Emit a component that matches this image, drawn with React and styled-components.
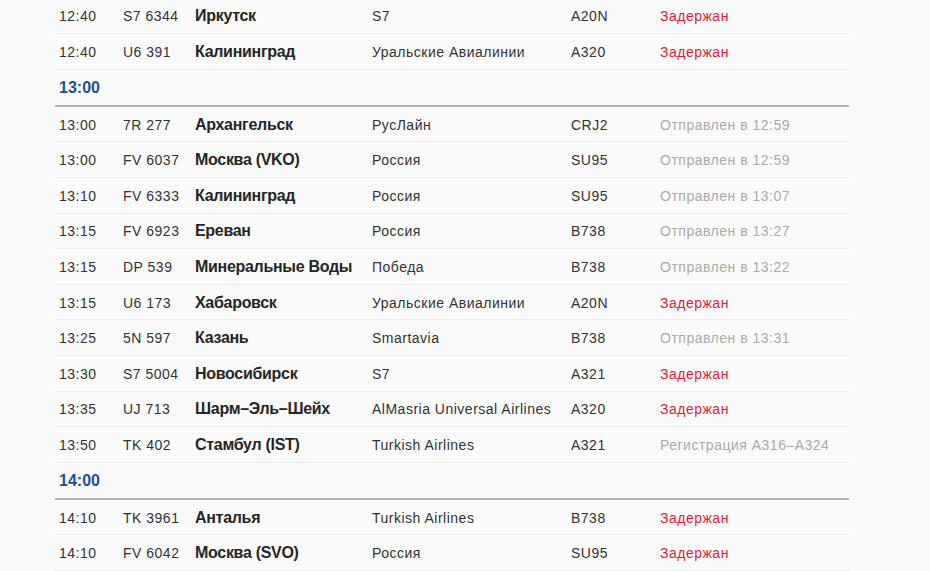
import React from 'react';
import styled, { createGlobalStyle } from 'styled-components';

const GlobalStyle = createGlobalStyle`
    html, body {
        margin: 0;
        padding: 0;
        background: #fafafa;
        font-family: "Liberation Sans", Arial, sans-serif;
        color: #333;
    }
`;

const groups = [
    {
        hour: null,
        flights: [
            ['12:40', 'S7 6344', 'Иркутск', 'S7', 'A20N', 'delayed'],
            ['12:40', 'U6 391', 'Калининград', 'Уральские Авиалинии', 'A320', 'delayed'],
        ],
    },
    {
        hour: '13:00',
        flights: [
            ['13:00', '7R 277', 'Архангельск', 'РусЛайн', 'CRJ2', 'Отправлен в 12:59'],
            ['13:00', 'FV 6037', 'Москва (VKO)', 'Россия', 'SU95', 'Отправлен в 12:59'],
            ['13:10', 'FV 6333', 'Калининград', 'Россия', 'SU95', 'Отправлен в 13:07'],
            ['13:15', 'FV 6923', 'Ереван', 'Россия', 'B738', 'Отправлен в 13:27'],
            ['13:15', 'DP 539', 'Минеральные Воды', 'Победа', 'B738', 'Отправлен в 13:22'],
            ['13:15', 'U6 173', 'Хабаровск', 'Уральские Авиалинии', 'A20N', 'delayed'],
            ['13:25', '5N 597', 'Казань', 'Smartavia', 'B738', 'Отправлен в 13:31'],
            ['13:30', 'S7 5004', 'Новосибирск', 'S7', 'A321', 'delayed'],
            ['13:35', 'UJ 713', 'Шарм–Эль–Шейх', 'AlMasria Universal Airlines', 'A320', 'delayed'],
            ['13:50', 'TK 402', 'Стамбул (IST)', 'Turkish Airlines', 'A321', 'Регистрация A316–A324'],
        ],
    },
    {
        hour: '14:00',
        flights: [
            ['14:10', 'TK 3961', 'Анталья', 'Turkish Airlines', 'B738', 'delayed'],
            ['14:10', 'FV 6042', 'Москва (SVO)', 'Россия', 'SU95', 'delayed'],
        ],
    },
];

const Board = () => {
    return (
        <Page>
            <GlobalStyle />
            <Table>
                {groups.map((group, g) => (
                    <React.Fragment key={g}>
                        {group.hour && <HourRow>{group.hour}</HourRow>}
                        {group.flights.map((f, i) => {
                            const delayed = f[5] === 'delayed';
                            return (
                                <Row key={i}>
                                    <Cell>{f[0]}</Cell>
                                    <Cell>{f[1]}</Cell>
                                    <City>{f[2]}</City>
                                    <Cell>{f[3]}</Cell>
                                    <Cell>{f[4]}</Cell>
                                    <Status $delayed={delayed}>{delayed ? 'Задержан' : f[5]}</Status>
                                </Row>
                            );
                        })}
                    </React.Fragment>
                ))}
            </Table>
        </Page>
    );
}

const Page = styled.div`
    width: 930px;
    height: 571px;
    overflow: hidden;
`;

const Table = styled.div`
    width: 794px;
    margin: -1.4px 0 0 55px;
`;

const Row = styled.div`
    display: grid;
    grid-template-columns: 64px 72px 177px 199px 89px 1fr;
    align-items: center;
    height: 34.6px;
    padding-top: 1px;
    box-sizing: border-box;
    height: 35.6px;
    border-bottom: 1px solid #ebebeb;
    font-size: 14px;
    letter-spacing: 0.5px;
`;

const Cell = styled.div`
    padding-left: 4px;
    white-space: nowrap;
`;

const City = styled(Cell)`
    font-size: 16px;
    font-weight: 700;
    letter-spacing: -0.3px;
    color: #262626;
`;

const Status = styled(Cell)`
    color: ${(p) => (p.$delayed ? '#dc1f37' : '#aaaaaa')};
`;

const HourRow = styled.div`
    display: flex;
    align-items: center;
    box-sizing: border-box;
    height: 37px;
    padding: 1px 0 0 4px;
    border-bottom: 2px solid #b3b3b3;
    color: #1b4f9c;
    font-size: 16px;
    font-weight: 700;
`;

export default Board;
